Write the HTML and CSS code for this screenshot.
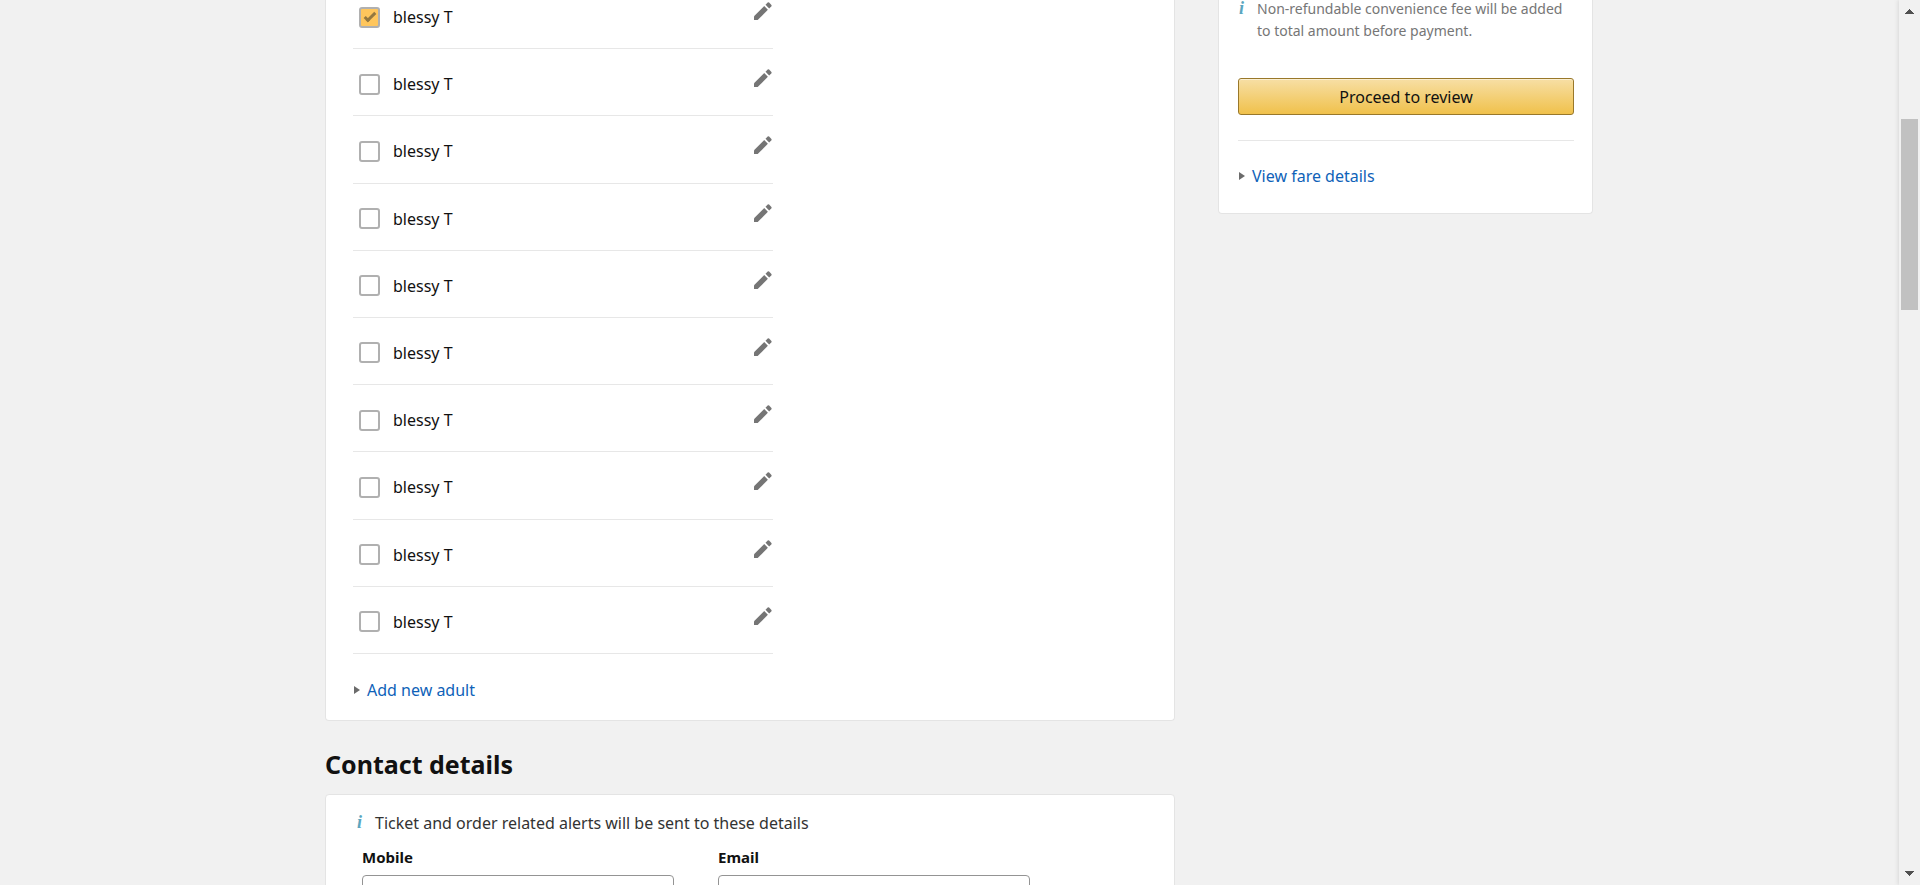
FILE: index.html
```html
<!DOCTYPE html>
<html lang="en">
<head>
<meta charset="utf-8">
<title>Traveller details</title>
<link rel="stylesheet" href="styles.css">
</head>
<body>
<svg class="sprite" aria-hidden="true">
  <symbol id="pencil" viewBox="0 0 18 18">
    <path d="M0 14.3 10.2 4.1 13.9 7.8 3.7 18H0z"/>
    <path d="M11.5 2.8 13.7.6Q14.4 0 15.1.6L17.4 2.9Q18 3.6 17.4 4.3L15.2 6.5z"/>
  </symbol>
</svg>
<div class="page">
  <main class="main">
    <section class="card travellers">
      <ul class="list">
        <li class="row"><label class="name"><input class="check" type="checkbox" checked>blessy T</label><button class="edit" type="button" aria-label="Edit"><svg class="pencil"><use href="#pencil"/></svg></button></li>
        <li class="row"><label class="name"><input class="check" type="checkbox">blessy T</label><button class="edit" type="button" aria-label="Edit"><svg class="pencil"><use href="#pencil"/></svg></button></li>
        <li class="row"><label class="name"><input class="check" type="checkbox">blessy T</label><button class="edit" type="button" aria-label="Edit"><svg class="pencil"><use href="#pencil"/></svg></button></li>
        <li class="row"><label class="name"><input class="check" type="checkbox">blessy T</label><button class="edit" type="button" aria-label="Edit"><svg class="pencil"><use href="#pencil"/></svg></button></li>
        <li class="row"><label class="name"><input class="check" type="checkbox">blessy T</label><button class="edit" type="button" aria-label="Edit"><svg class="pencil"><use href="#pencil"/></svg></button></li>
        <li class="row"><label class="name"><input class="check" type="checkbox">blessy T</label><button class="edit" type="button" aria-label="Edit"><svg class="pencil"><use href="#pencil"/></svg></button></li>
        <li class="row"><label class="name"><input class="check" type="checkbox">blessy T</label><button class="edit" type="button" aria-label="Edit"><svg class="pencil"><use href="#pencil"/></svg></button></li>
        <li class="row"><label class="name"><input class="check" type="checkbox">blessy T</label><button class="edit" type="button" aria-label="Edit"><svg class="pencil"><use href="#pencil"/></svg></button></li>
        <li class="row"><label class="name"><input class="check" type="checkbox">blessy T</label><button class="edit" type="button" aria-label="Edit"><svg class="pencil"><use href="#pencil"/></svg></button></li>
        <li class="row"><label class="name"><input class="check" type="checkbox">blessy T</label><button class="edit" type="button" aria-label="Edit"><svg class="pencil"><use href="#pencil"/></svg></button></li>
      </ul>
      <a class="expander" href="#"><span class="arrow"></span>Add new adult</a>
    </section>
    <h2 class="title">Contact details</h2>
    <section class="card contact">
      <p class="alert"><i class="info">i</i>Ticket and order related alerts will be sent to these details</p>
      <div class="fields">
        <div class="field"><label class="label" for="mobile">Mobile</label><input class="input" id="mobile" type="tel"></div>
        <div class="field"><label class="label" for="email">Email</label><input class="input" id="email" type="email"></div>
      </div>
    </section>
  </main>
  <aside class="card summary">
    <p class="note"><i class="info">i</i><span>Non-refundable convenience fee will be added to total amount before payment.</span></p>
    <button class="proceed" type="button">Proceed to review</button>
    <hr class="rule">
    <a class="expander" href="#"><span class="arrow"></span>View fare details</a>
  </aside>
</div>
<div class="scrollbar" aria-hidden="true">
  <svg class="step" viewBox="0 0 9 5"><path d="M4 0h1v1h1v1h1v1h1v1h1v1H0V4h1V3h1V2h1V1h1z"/></svg>
  <div class="track"><div class="thumb"></div></div>
  <svg class="step" viewBox="0 0 9 5"><path d="M0 0h9v1H8v1H7v1H6v1H5v1H4V4H3V3H2V2H1V1H0z"/></svg>
</div>
</body>
</html>
```

FILE: styles.css
```css
*, *::before { box-sizing: border-box; }

body {
  margin: 0;
  height: 100vh;
  overflow: hidden;
  background: #f1f1f1;
  color: #111;
  font: 16px/22px "Noto Sans", sans-serif;
}

.sprite { display: none; }

.page {
  display: grid;
  grid-template-columns: minmax(0, 1fr) 375px;
  align-items: start;
  gap: 43px;
  max-width: 1270px;
  margin: -18px auto 0;
  padding-right: 2px;
}

.card {
  background: #fff;
  border: 1px solid #e4e4e4;
  border-radius: 4px;
}

.travellers {
  border-top: 0;
  border-radius: 0 0 4px 4px;
  padding: 0 27px 19px;
}

.list {
  display: grid;
  grid-auto-rows: 1fr;
  min-height: 672px;
  max-width: 420px;
  margin: 0;
  padding: 0;
  list-style: none;
}

.row {
  display: flex;
  align-items: flex-start;
  justify-content: space-between;
  padding: 20px 1px 16px 6px;
  border-bottom: 1px solid #e7e7e7;
}

.name {
  display: flex;
  align-items: center;
  gap: 13px;
  padding-top: 4px;
}

.check {
  appearance: none;
  display: grid;
  place-items: center;
  width: 21px;
  height: 21px;
  margin: 0;
  border: 2px solid #b0b0b0;
  border-radius: 3px;
  background: #fff;
}

.check:checked { background: #ffc65c; }

.check:checked::before {
  content: "";
  width: 12px;
  height: 6px;
  margin-bottom: 3px;
  border: solid #94783f;
  border-width: 0 0 3px 3px;
  transform: rotate(-45deg);
}

.edit {
  padding: 0;
  border: 0;
  background: none;
}

.pencil {
  display: block;
  width: 18px;
  height: 18px;
  fill: #757575;
}

.expander {
  display: flex;
  align-items: center;
  gap: 7px;
  padding-left: 1px;
  color: #0f62b8;
  text-decoration: none;
}

.travellers .expander { margin-top: 25px; }

.arrow {
  border: solid transparent;
  border-width: 4px 0 4px 6px;
  border-left-color: #6b6b6b;
}

.title {
  margin: 26px 0 13px;
  font-size: 25px;
  line-height: 34px;
  font-weight: 700;
}

.contact { padding: 17px 27px 24px; }

.alert, .note { display: flex; margin: 0; }

.alert {
  gap: 13px;
  padding-left: 4px;
  color: #333;
}

.info {
  color: #5ba6bf;
  font: italic bold 18px/20px "Liberation Serif", serif;
}

.fields {
  display: flex;
  gap: 44px;
  padding: 12px 0 0 9px;
}

.field {
  display: flex;
  flex-direction: column;
  flex: 0 1 312px;
  gap: 7px;
}

.label { font-weight: 700; font-size: 15px; }

.input {
  width: 100%;
  height: 38px;
  border: 1px solid #949494;
  border-radius: 4px;
  background: #fff;
}

.summary {
  border-top: 0;
  padding: 16px 18px 26px 19px;
}

.note {
  gap: 13px;
  padding-left: 1px;
  font-size: 14px;
  color: #767676;
}

.proceed {
  width: 100%;
  height: 37px;
  margin-top: 36px;
  border: 1px solid #99782a;
  border-radius: 3px;
  background: linear-gradient(#f7dfa5, #f0c14b);
  box-shadow: inset 0 1px 0 #fbefd1;
  color: #111;
  font: inherit;
}

.rule {
  margin: 25px 0 24px;
  border: 0;
  border-top: 1px solid #e7e7e7;
}

.scrollbar {
  position: fixed;
  inset: 0 0 0 auto;
  display: flex;
  flex-direction: column;
  justify-content: space-between;
  align-items: center;
  width: 21px;
  padding: 9px 0;
  background: #f1f1f1;
  box-shadow: -1px 0 4px #d8d8d8;
}

.step {
  width: 9px;
  height: 5px;
  fill: #505050;
}

.track {
  flex: 1;
  padding-top: 105px;
}

.thumb {
  width: 17px;
  height: 191px;
  background: #c1c1c1;
}
```
